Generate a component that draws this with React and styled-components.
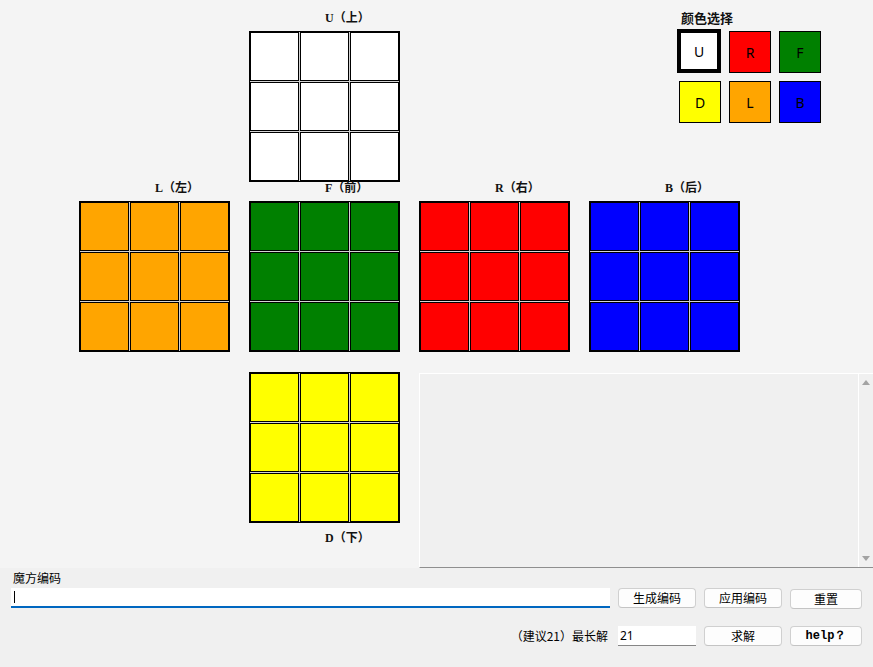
import React from 'react';
import styled, { createGlobalStyle } from 'styled-components';

const GlobalStyle = createGlobalStyle`
body {
  margin: 0;
  background: #f0f0f0;
  font-family: "Noto Sans CJK SC", "Noto Sans", sans-serif;
}
`;

const COLORS = {
  U: '#ffffff',
  R: '#ff0000',
  F: '#008000',
  D: '#ffff00',
  L: '#ffa500',
  B: '#0000ff',
};

const Workspace = styled.div`
height: 568px;
box-sizing: border-box;
background: #f4f4f4;
padding: 12px 0 0 79px;
display: grid;
grid-template-columns: repeat(4, 151px) 1fr;
grid-template-rows: auto auto auto;
column-gap: 19px;
align-items: start;
`;

const FaceBlock = styled.div`
grid-column: ${p => p.col};
grid-row: ${p => p.row};
margin-top: ${p => p.below ? 19 : 0}px;
display: flex;
flex-direction: ${p => p.below ? 'column-reverse' : 'column'};
`;

const FaceLabel = styled.div`
height: 12px;
box-sizing: content-box;
font-family: "Liberation Serif", "Noto Sans CJK SC", serif;
font-weight: bold;
font-size: 12px;
line-height: 12px;
color: #111;
padding-left: 76px;
padding-top: ${p => p.below ? 9 : 0}px;
padding-bottom: ${p => p.below ? 0 : 7}px;
`;

const FaceGrid = styled.div`
width: 151px;
height: 151px;
box-sizing: border-box;
border: 1px solid #000;
background: #d4d4d4;
display: grid;
grid-template-columns: repeat(3, 49px);
grid-template-rows: repeat(3, 49px);
gap: 1px;
`;

const Sticker = styled.div`
box-sizing: border-box;
border: 1px solid #000;
background: ${p => p.color};
`;

const Picker = styled.div`
grid-column: 4 / -1;
grid-row: 1;
margin-left: 90px;
`;

const PickerTitle = styled.div`
height: 12px;
font-size: 13px;
font-weight: bold;
line-height: 12px;
padding: 0 0 7px 2px;
color: #111;
`;

const SwatchGrid = styled.div`
display: grid;
grid-template-columns: repeat(3, 42px);
grid-template-rows: repeat(2, 42px);
gap: 8px;
`;

const Swatch = styled.div`
box-sizing: border-box;
width: ${p => p.selected ? 44 : 42}px;
height: ${p => p.selected ? 44 : 42}px;
margin: ${p => p.selected ? '-2px 0 0 -2px' : '0'};
border: ${p => p.selected ? 4 : 1}px solid #000;
background: ${p => p.color};
display: flex;
align-items: center;
justify-content: center;
font-family: "Noto Sans", sans-serif;
font-size: 14px;
color: #000;
`;

const Output = styled.div`
grid-column: 3 / -1;
grid-row: 3;
margin-top: 20px;
height: 195px;
box-sizing: border-box;
border-top: 1px solid #fff;
border-left: 1px solid #fff;
border-bottom: 1px solid #8f8f8f;
background: #f0f0f0;
display: flex;
`;

const OutputText = styled.div`
flex: 1;
`;

const Scrollbar = styled.div`
width: 14px;
border-left: 1px solid #fff;
display: flex;
flex-direction: column;
justify-content: space-between;
align-items: center;
padding: 6px 0 6px;
`;

const Arrow = styled.div`
width: 0;
height: 0;
border-left: 4px solid transparent;
border-right: 4px solid transparent;
${p => p.down ? 'border-top: 5px solid #a3a3a3;' : 'border-bottom: 5px solid #a3a3a3;'}
`;

const Bottom = styled.div`
height: 99px;
box-sizing: border-box;
background: #f0f0f0;
padding: 1px 11px 0;
font-size: 12px;
color: #000;
`;

const FieldLabel = styled.div`
height: 18px;
line-height: 18px;
padding-left: 2px;
`;

const Row = styled.div`
display: grid;
grid-template-columns: 1fr 78px 78px 72px;
column-gap: 8px;
align-items: center;
margin-top: ${p => p.gap || 0}px;
`;

const CodeField = styled.div`
height: 20px;
box-sizing: border-box;
background: #fff;
border-bottom: 2px solid #0067c0;
display: flex;
align-items: center;
padding-left: 3px;
`;

const Caret = styled.div`
width: 1px;
height: 12px;
background: #000;
`;

const Button = styled.button`
height: 20px;
box-sizing: border-box;
padding: 0;
background: #fdfdfd;
border: 1px solid #d0d0d0;
border-bottom-color: #c4c4c4;
border-radius: 4px;
font-family: ${p => p.serif ? '"Liberation Mono", monospace' : '"Noto Sans CJK SC", sans-serif'};
font-weight: ${p => p.serif ? 'bold' : 'normal'};
font-size: 12px;
line-height: 18px;
color: #000;
margin-top: ${p => p.nudge || 0}px;
`;

const Hint = styled.div`
justify-self: end;
padding-right: 2px;
height: 20px;
line-height: 20px;
`;

const DepthField = styled.input`
height: 20px;
box-sizing: border-box;
border: 0;
border-bottom: 1px solid #868686;
background: #fff;
padding: 0 0 0 2px;
font-family: "Noto Sans", sans-serif;
font-size: 12px;
color: #000;
outline: none;
`;

const faces = [
  { id: 'U', label: 'U（上）', col: 2, row: 1 },
  { id: 'L', label: 'L（左）', col: 1, row: 2 },
  { id: 'F', label: 'F（前）', col: 2, row: 2 },
  { id: 'R', label: 'R（右）', col: 3, row: 2 },
  { id: 'B', label: 'B（后）', col: 4, row: 2 },
  { id: 'D', label: 'D（下）', col: 2, row: 3, below: true },
];

const swatches = ['U', 'R', 'F', 'D', 'L', 'B'];

const Face = ({ face }) => (
  <FaceBlock col={face.col} row={face.row} below={face.below}>
    <FaceLabel below={face.below}>{face.label}</FaceLabel>
    <FaceGrid>
      {Array.from({ length: 9 }).map((_, i) => <Sticker key={i} color={COLORS[face.id]} />)}
    </FaceGrid>
  </FaceBlock>
);

const App = () => {
  return (
    <>
      <GlobalStyle />
      <Workspace>
        {faces.map(f => <Face key={f.id} face={f} />)}
        <Picker>
          <PickerTitle>颜色选择</PickerTitle>
          <SwatchGrid>
            {swatches.map(s => (
              <Swatch key={s} color={COLORS[s]} selected={s === 'U'}>{s}</Swatch>
            ))}
          </SwatchGrid>
        </Picker>
        <Output>
          <OutputText />
          <Scrollbar>
            <Arrow />
            <Arrow down />
          </Scrollbar>
        </Output>
      </Workspace>
      <Bottom>
        <FieldLabel>魔方编码</FieldLabel>
        <Row>
          <CodeField><Caret /></CodeField>
          <Button>生成编码</Button>
          <Button>应用编码</Button>
          <Button nudge={2}>重置</Button>
        </Row>
        <Row gap={17}>
          <Hint>（建议21）最长解</Hint>
          <DepthField defaultValue="21" />
          <Button>求解</Button>
          <Button serif>help？</Button>
        </Row>
      </Bottom>
    </>
  );
};

export default App;
